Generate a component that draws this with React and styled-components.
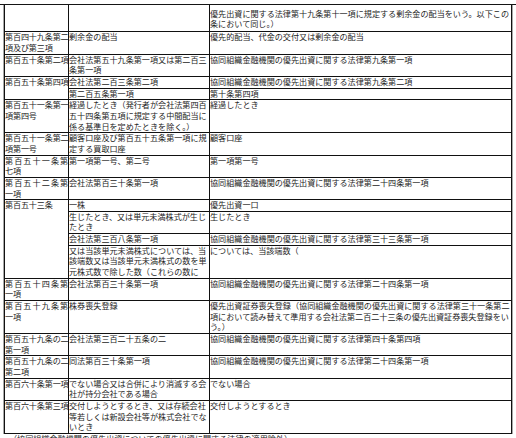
import React from 'react';
import styled, { createGlobalStyle } from 'styled-components';

const Global = createGlobalStyle`
  html, body { margin: 0; padding: 0; background: #ffffff; }
  body { font-family: "Noto Sans CJK JP", "Noto Sans", sans-serif; }
`;

const Page = styled.div`
  width: 516px;
  height: 438px;
  overflow: hidden;
  padding-top: 4px;
  box-sizing: border-box;
`;

const TopRule = styled.div`
  height: 1px;
  background: #151515;
`;

const Frame = styled.div`
  margin-left: 3px;
  width: 510px;
  box-sizing: border-box;
  border-left: 1px solid #a8a8a8;
  border-right: 1px solid #a8a8a8;
`;

const Table = styled.table`
  box-sizing: border-box;
  width: 508px;
  table-layout: fixed;
  border-collapse: separate;
  border-spacing: 0;
  border-left: 1px solid #111;
  font-size: 8.1px;
  line-height: 10.65px;
  color: #242424;
`;

const Col = styled.col`
  width: ${(p) => p.$w}px;
`;

const Cell = styled.td`
  padding: ${(p) => (p.$first ? '3.5px 0 1.5px' : '0')};
  border-right: 1px solid #111;
  border-bottom: 1px solid #111;
  vertical-align: top;
  white-space: nowrap;
  overflow: visible;
  letter-spacing: ${(p) => (p.$article ? '-0.15px' : '0')};
`;

const Spread = styled.span`
  display: block;
  text-align: justify;
  text-align-last: justify;
`;

const Caption = styled.p`
  margin: 0;
  padding-left: 9px;
  font-size: 8.1px;
  line-height: 10.65px;
  color: #242424;
  white-space: nowrap;
`;

const Lines = ({ t }) =>
  t.map((line, i) => (
    <React.Fragment key={i}>
      {i > 0 && <br />}
      {line}
    </React.Fragment>
  ));

const rows = [
  { a: ['第百四十九条第二', '項及び第三項'], b: ['剰余金の配当'], c: ['優先的配当、代金の交付又は剰余金の配当'] },
  { a: ['第百五十条第二項'], b: ['会社法第五十九条第一項又は第二百三', '条第一項'], c: ['協同組織金融機関の優先出資に関する法律第九条第一項'] },
  { a: ['第百五十条第四項'], span: 2, b: ['会社法第二百三条第二項'], c: ['協同組織金融機関の優先出資に関する法律第九条第二項'] },
  { b: ['第二百五条第一項'], c: ['第十条第四項'] },
  { a: ['第百五十一条第一', '項第四号'], b: ['経過したとき（発行者が会社法第四百', '五十四条第五項に規定する中間配当に', '係る基準日を定めたときを除く。）'], c: ['経過したとき'] },
  { a: ['第百五十一条第二', '項第一号'], b: ['顧客口座及び第百五十五条第一項に規', '定する買取口座'], c: ['顧客口座'] },
  { a: ['第百五十一条第', '七項'], spread: true, b: ['第一項第一号、第二号'], c: ['第一項第一号'] },
  { a: ['第百五十二条第', '一項'], spread: true, b: ['会社法第百三十条第一項'], c: ['協同組織金融機関の優先出資に関する法律第二十四条第一項'] },
  { a: ['第百五十三条'], span: 4, b: ['一株'], c: ['優先出資一口'] },
  { b: ['生じたとき、又は単元未満株式が生じ', 'たとき'], c: ['生じたとき'] },
  { b: ['会社法第三百八条第一項'], c: ['協同組織金融機関の優先出資に関する法律第三十三条第一項'] },
  { b: ['又は当該単元未満株式については、当', '該端数又は当該単元未満株式の数を単', '元株式数で除した数（これらの数に'], c: ['については、当該端数（'] },
  { a: ['第百五十四条第', '一項'], spread: true, b: ['会社法第百三十条第一項'], c: ['協同組織金融機関の優先出資に関する法律第二十四条第一項'] },
  { a: ['第百五十九条第', '一項'], spread: true, b: ['株券喪失登録'], c: ['優先出資証券喪失登録（協同組織金融機関の優先出資に関する法律第三十一条第二', '項において読み替えて準用する会社法第二百二十三条の優先出資証券喪失登録をい', 'う。）'] },
  { a: ['第百五十九条の二', '第一項'], b: ['会社法第三百二十五条の二'], c: ['協同組織金融機関の優先出資に関する法律第四十条第四項'] },
  { a: ['第百五十九条の二', '第二項'], b: ['同法第百三十条第一項'], c: ['協同組織金融機関の優先出資に関する法律第二十四条第一項'] },
  { a: ['第百六十条第一項'], b: ['でない場合又は合併により消滅する会', '社が持分会社である場合'], c: ['でない場合'] },
  { a: ['第百六十条第三項'], b: ['交付しようとするとき、又は存続会社', '等若しくは新設会社等が株式会社でな', 'いとき'], c: ['交付しようとするとき'] },
];

const ArticleText = ({ r }) =>
  r.spread ? (
    <>
      <Spread>{r.a[0]}</Spread>
      {r.a[1]}
    </>
  ) : (
    <Lines t={r.a} />
  );

export default function App() {
  return (
    <Page>
      <Global />
      <TopRule />
      <Frame>
        <Table>
          <colgroup>
            <Col $w={64} />
            <Col $w={141} />
            <Col $w={302} />
          </colgroup>
          <tbody>
            <tr>
              <Cell $first />
              <Cell $first />
              <Cell $first>
                <Lines t={['優先出資に関する法律第十九条第十一項に規定する剰余金の配当をいう。以下この', '条において同じ。）']} />
              </Cell>
            </tr>
            {rows.map((r, i) => (
              <tr key={i}>
                {r.a && (
                  <Cell $article rowSpan={r.span || 1}>
                    <ArticleText r={r} />
                  </Cell>
                )}
                <Cell>
                  <Lines t={r.b} />
                </Cell>
                <Cell>
                  <Lines t={r.c} />
                </Cell>
              </tr>
            ))}
          </tbody>
        </Table>
      </Frame>
      <Caption>（協同組織金融機関の優先出資についての優先出資に関する法律の適用除外）</Caption>
    </Page>
  );
}
